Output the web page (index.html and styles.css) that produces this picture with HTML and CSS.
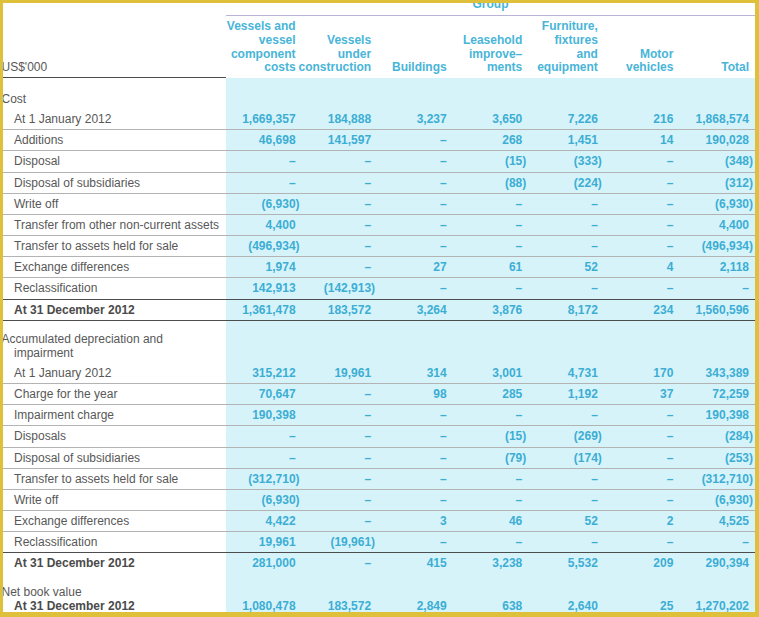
FILE: index.html
```html
<!DOCTYPE html>
<html lang="en">
<head>
<meta charset="utf-8">
<title>Property, plant and equipment – Group</title>
<link rel="stylesheet" href="styles.css">
</head>
<body>
<div class="frame">
<table class="ppe">
<colgroup><col class="c-label"><col><col><col><col><col><col><col></colgroup>
<thead>
<tr class="r-group"><th class="blank"></th><th class="group" colspan="7">Group</th></tr>
<tr class="r-head">
<th class="unit">US$'000</th>
<th class="h"><div class="hs"><span>Vessels and</span><span>vessel</span><span>component</span><span>costs</span></div></th>
<th class="h"><div class="hs"><span>Vessels</span><span>under</span><span>construction</span></div></th>
<th class="h"><div class="hs"><span>Buildings</span></div></th>
<th class="h"><div class="hs"><span>Leasehold</span><span>improve–</span><span>ments</span></div></th>
<th class="h"><div class="hs"><span>Furniture,</span><span>fixtures</span><span>and</span><span>equipment</span></div></th>
<th class="h"><div class="hs"><span>Motor</span><span>vehicles</span></div></th>
<th class="h"><div class="hs"><span>Total</span></div></th>
</tr>
</thead>
<tbody>
<tr class="sec sec-cost"><td class="lbl">Cost</td><td class="n"></td><td class="n"></td><td class="n"></td><td class="n"></td><td class="n"></td><td class="n"></td><td class="n"></td></tr>
<tr class="row"><td class="lbl">At 1 January 2012</td><td class="n">1,669,357</td><td class="n">184,888</td><td class="n">3,237</td><td class="n">3,650</td><td class="n">7,226</td><td class="n">216</td><td class="n">1,868,574</td></tr>
<tr class="row"><td class="lbl">Additions</td><td class="n">46,698</td><td class="n">141,597</td><td class="n">–</td><td class="n">268</td><td class="n">1,451</td><td class="n">14</td><td class="n">190,028</td></tr>
<tr class="row"><td class="lbl">Disposal</td><td class="n">–</td><td class="n">–</td><td class="n">–</td><td class="n neg">(15)</td><td class="n neg">(333)</td><td class="n">–</td><td class="n neg">(348)</td></tr>
<tr class="row"><td class="lbl">Disposal of subsidiaries</td><td class="n">–</td><td class="n">–</td><td class="n">–</td><td class="n neg">(88)</td><td class="n neg">(224)</td><td class="n">–</td><td class="n neg">(312)</td></tr>
<tr class="row"><td class="lbl">Write off</td><td class="n neg">(6,930)</td><td class="n">–</td><td class="n">–</td><td class="n">–</td><td class="n">–</td><td class="n">–</td><td class="n neg">(6,930)</td></tr>
<tr class="row"><td class="lbl">Transfer from other non-current assets</td><td class="n">4,400</td><td class="n">–</td><td class="n">–</td><td class="n">–</td><td class="n">–</td><td class="n">–</td><td class="n">4,400</td></tr>
<tr class="row"><td class="lbl">Transfer to assets held for sale</td><td class="n neg">(496,934)</td><td class="n">–</td><td class="n">–</td><td class="n">–</td><td class="n">–</td><td class="n">–</td><td class="n neg">(496,934)</td></tr>
<tr class="row"><td class="lbl">Exchange differences</td><td class="n">1,974</td><td class="n">–</td><td class="n">27</td><td class="n">61</td><td class="n">52</td><td class="n">4</td><td class="n">2,118</td></tr>
<tr class="row pre-total"><td class="lbl">Reclassification</td><td class="n">142,913</td><td class="n neg">(142,913)</td><td class="n">–</td><td class="n">–</td><td class="n">–</td><td class="n">–</td><td class="n">–</td></tr>
<tr class="row total total-ruled"><td class="lbl">At 31 December 2012</td><td class="n">1,361,478</td><td class="n">183,572</td><td class="n">3,264</td><td class="n">3,876</td><td class="n">8,172</td><td class="n">234</td><td class="n">1,560,596</td></tr>

<tr class="sec sec-dep"><td class="lbl">Accumulated depreciation and<br>impairment</td><td class="n"></td><td class="n"></td><td class="n"></td><td class="n"></td><td class="n"></td><td class="n"></td><td class="n"></td></tr>
<tr class="row"><td class="lbl">At 1 January 2012</td><td class="n">315,212</td><td class="n">19,961</td><td class="n">314</td><td class="n">3,001</td><td class="n">4,731</td><td class="n">170</td><td class="n">343,389</td></tr>
<tr class="row"><td class="lbl">Charge for the year</td><td class="n">70,647</td><td class="n">–</td><td class="n">98</td><td class="n">285</td><td class="n">1,192</td><td class="n">37</td><td class="n">72,259</td></tr>
<tr class="row"><td class="lbl">Impairment charge</td><td class="n">190,398</td><td class="n">–</td><td class="n">–</td><td class="n">–</td><td class="n">–</td><td class="n">–</td><td class="n">190,398</td></tr>
<tr class="row"><td class="lbl">Disposals</td><td class="n">–</td><td class="n">–</td><td class="n">–</td><td class="n neg">(15)</td><td class="n neg">(269)</td><td class="n">–</td><td class="n neg">(284)</td></tr>
<tr class="row"><td class="lbl">Disposal of subsidiaries</td><td class="n">–</td><td class="n">–</td><td class="n">–</td><td class="n neg">(79)</td><td class="n neg">(174)</td><td class="n">–</td><td class="n neg">(253)</td></tr>
<tr class="row"><td class="lbl">Transfer to assets held for sale</td><td class="n neg">(312,710)</td><td class="n">–</td><td class="n">–</td><td class="n">–</td><td class="n">–</td><td class="n">–</td><td class="n neg">(312,710)</td></tr>
<tr class="row"><td class="lbl">Write off</td><td class="n neg">(6,930)</td><td class="n">–</td><td class="n">–</td><td class="n">–</td><td class="n">–</td><td class="n">–</td><td class="n neg">(6,930)</td></tr>
<tr class="row"><td class="lbl">Exchange differences</td><td class="n">4,422</td><td class="n">–</td><td class="n">3</td><td class="n">46</td><td class="n">52</td><td class="n">2</td><td class="n">4,525</td></tr>
<tr class="row pre-total"><td class="lbl">Reclassification</td><td class="n">19,961</td><td class="n neg">(19,961)</td><td class="n">–</td><td class="n">–</td><td class="n">–</td><td class="n">–</td><td class="n">–</td></tr>
<tr class="row total"><td class="lbl">At 31 December 2012</td><td class="n">281,000</td><td class="n">–</td><td class="n">415</td><td class="n">3,238</td><td class="n">5,532</td><td class="n">209</td><td class="n">290,394</td></tr>

<tr class="sec sec-nbv"><td class="lbl">Net book value</td><td class="n"></td><td class="n"></td><td class="n"></td><td class="n"></td><td class="n"></td><td class="n"></td><td class="n"></td></tr>
<tr class="row total final"><td class="lbl">At 31 December 2012</td><td class="n">1,080,478</td><td class="n">183,572</td><td class="n">2,849</td><td class="n">638</td><td class="n">2,640</td><td class="n">25</td><td class="n">1,270,202</td></tr>
</tbody>
</table>
</div>
</body>
</html>
```

FILE: styles.css
```css
html, body {
  margin: 0;
  padding: 0;
  background: #ffffff;
}

.frame {
  box-sizing: border-box;
  width: 759px;
  height: 617px;
  border-style: solid;
  border-color: #dfc03a;
  border-width: 3px 4px 5px 3px;
  overflow: hidden;
  background: #ffffff;
}

.ppe {
  border-collapse: separate;
  border-spacing: 0;
  table-layout: fixed;
  width: 754px;
  margin: -9px 0 0 -2px;
  font-family: "Liberation Sans", Arial, sans-serif;
  font-size: 12px;
  line-height: 14.16px;
  color: #585858;
}

.ppe col.c-label {
  width: 225px;
}

.ppe th,
.ppe td {
  padding: 0;
  font-weight: normal;
  text-align: left;
}

/* Group caption row */
.ppe .r-group .group {
  padding: 3px 0 4px 0;
  text-align: center;
  font-weight: bold;
  color: #48b5d8;
  border-bottom: 1px solid #bab4da;
}

/* Column headings */
.ppe .r-head th {
  vertical-align: bottom;
}

.ppe .r-head .unit {
  padding: 0 0 3px 13px;
  text-indent: -12.5px;
  white-space: nowrap;
  color: #585858;
  border-bottom: 1px solid #4d4d4d;
}

.ppe .r-head .h {
  padding: 4px 6px 3px 0;
  line-height: 13.7px;
  font-weight: bold;
  color: #48b5d8;
}

.hs {
  display: flex;
  flex-direction: column;
  align-items: flex-end;
  white-space: nowrap;
}

/* Body */
.ppe .lbl {
  white-space: nowrap;
  padding-left: 13px;
}

.ppe .n {
  text-align: right;
  white-space: nowrap;
  padding-right: 6px;
  font-weight: bold;
  color: #3caed4;
  background: #d6f3fa;
}

.ppe .n.neg {
  padding-right: 2px;
}

.ppe .row td {
  padding-top: 3px;
  padding-bottom: 3px;
  border-bottom: 1px solid #b3b3b3;
}

.ppe .row.pre-total td {
  border-bottom-color: #4d4d4d;
}

.ppe .row.total td {
  border-bottom: 0;
  padding-bottom: 4px;
}

.ppe .row.total .lbl {
  font-weight: bold;
  color: #4a4a4a;
}

.ppe .row.total-ruled td {
  padding-bottom: 3px;
  border-bottom: 1px solid #4d4d4d;
}

.ppe .sec .lbl {
  text-indent: -12.5px;
  vertical-align: bottom;
}

.ppe .sec-cost .lbl {
  padding-top: 14px;
  padding-bottom: 3px;
}

.ppe .sec-dep .lbl {
  padding-top: 11px;
  padding-bottom: 3px;
  white-space: normal;
}

.ppe .sec-nbv .lbl {
  padding-top: 10px;
  padding-bottom: 0;
}

.ppe .row.final td {
  padding-top: 0;
}
```
